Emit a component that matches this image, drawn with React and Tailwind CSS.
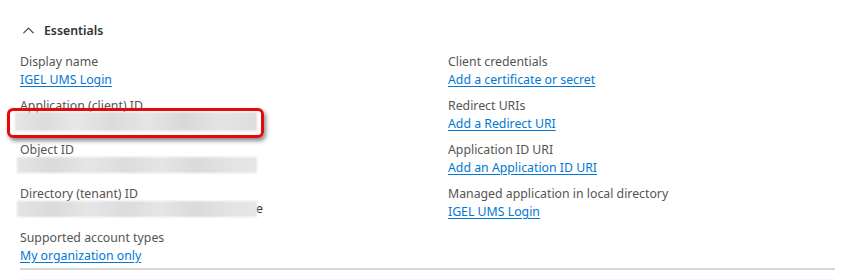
import { ChevronUp } from 'lucide-react'

const left = [
    { label: 'Display name', link: 'IGEL UMS Login' },
    { label: 'Application (client) ID', blur: 'client' },
    { label: 'Object ID', blur: 'object' },
    { label: 'Directory (tenant) ID', blur: 'tenant', tail: 'e' },
    { label: 'Supported account types', link: 'My organization only' },
]

const right = [
    { label: 'Client credentials', link: 'Add a certificate or secret' },
    { label: 'Redirect URIs', link: 'Add a Redirect URI' },
    { label: 'Application ID URI', link: 'Add an Application ID URI' },
    { label: 'Managed application in local directory', link: 'IGEL UMS Login' },
]

function Blurred({ tail, kind }) {
    // redacted value, smeared grey strip
    if (kind === 'client') {
        return (
            <div className="-ml-[5px] -mt-[3px] w-[242px] h-[19px] bg-[linear-gradient(90deg,#e6e6e6_0%,#dcdcdc_12%,#e8e8e8_25%,#dbdbdb_40%,#e5e5e5_55%,#d8d8d8_70%,#e4e4e4_85%,#dedede_100%)] blur-[1px]" />
        )
    }
    return (
        <div className="flex items-end -mt-[2px]">
            <div className="-ml-[3px] w-[240px] h-[16px] bg-[linear-gradient(90deg,#e4e4e4_0%,#dadada_15%,#e6e6e6_30%,#dcdcdc_45%,#e5e5e5_60%,#dadada_75%,#e4e4e4_90%,#e7e7e7_100%)] blur-[0.8px]" />
            {tail && <span className="text-[#323130] leading-[16px] -ml-[1px]">{tail}</span>}
        </div>
    )
}

function Field({ item }) {
    return (
        <div className="flex flex-col h-[44px]">
            <div className="leading-[18px] text-[#555453] whitespace-nowrap">{item.label}</div>
            {item.link ? (
                <a href="#" className="leading-[18px] text-[#0078d4] underline underline-offset-[2px] whitespace-nowrap self-start">
                    {item.link}
                </a>
            ) : (
                <Blurred tail={item.tail} kind={item.blur} />
            )}
        </div>
    )
}

export default function App() {
    return (
        <div className="w-[861px] h-[280px] bg-white overflow-hidden text-[12.3px]" style={{ fontFamily: '"Segoe UI", "Noto Sans", "Liberation Sans", sans-serif' }}>
            <div className="pt-[20px] pl-[20px] flex items-center h-[22px] box-content">
                <ChevronUp size={19} strokeWidth={1.3} className="text-[#323130] -ml-[1px] -mt-[1px]" />
                <span className="ml-[6px] font-semibold text-[#323130] leading-[20px]">Essentials</span>
            </div>
            <div className="relative pl-[20px] pt-[11px] grid grid-cols-[428px_1fr]">
                <div className="flex flex-col">
                    {left.map((it) => <Field key={it.label} item={it} />)}
                </div>
                <div className="flex flex-col">
                    {right.map((it) => <Field key={it.label} item={it} />)}
                </div>
                {/* red annotation around the client id */}
                <div className="absolute left-[7px] top-[66px] w-[257px] h-[30px] rounded-[6px] border-[3.5px] border-[#e20a0a] shadow-[2px_3px_4px_rgba(0,0,0,0.45)]" />
            </div>
            <div className="mx-[20px] w-[815px] mt-[-5px] border-t-2 border-[#d6d6d6]" />
            <div className="mx-[20px] w-[815px] mt-[9px] h-[4px] bg-[#f3f7fd]" />
        </div>
    )
}
